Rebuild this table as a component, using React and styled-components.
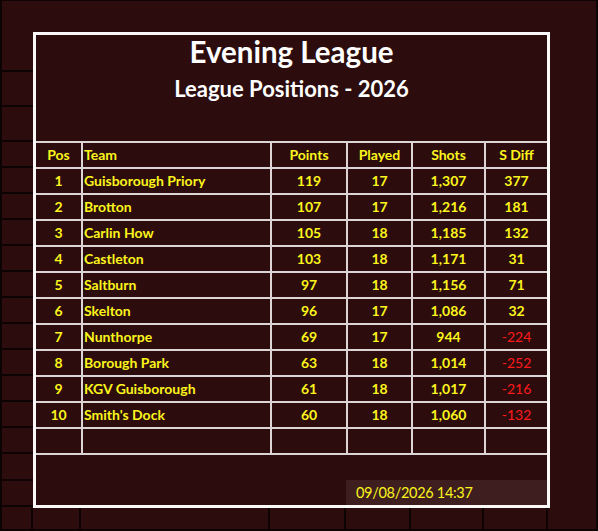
import React from "react";
import styled, { createGlobalStyle } from "styled-components";

const GlobalStyle = createGlobalStyle`
  body {
    margin: 0;
    background: #2c0c0d;
    font-family: "Lato", "Open Sans", sans-serif;
  }
`;

const Sheet = styled.div`
  width: 598px;
  height: 531px;
  box-sizing: border-box;
  background: #2c0c0d;
  border-top: 1px solid #0d0303;
  border-left: 2px solid #0d0303;
  border-right: 2px solid #0d0303;
  border-bottom: 2px solid #0d0303;
  display: flex;
  flex-direction: column;
`;

const TopStrip = styled.div`
  height: 31px;
`;

const Middle = styled.div`
  display: flex;
  height: 476px;
`;

const LeftGutter = styled.div`
  width: 31px;
  display: flex;
  flex-direction: column;
`;

const GutterCell = styled.div`
  box-sizing: border-box;
  height: ${(p) => p.$h}px;
  border-bottom: ${(p) => (p.$plain ? "none" : "2px solid #0d0303")};
`;

const Board = styled.div`
  width: 517px;
  box-sizing: border-box;
  border: 3px solid #fbf8f8;
  display: flex;
  flex-direction: column;
`;

const TitleBlock = styled.div`
  height: 106px;
  text-align: center;
  color: #ffffff;
  font-weight: 700;
`;

const Title = styled.div`
  font-size: 29.5px;
  line-height: 34px;
`;

const Subtitle = styled.div`
  font-size: 22px;
  line-height: 25px;
  margin-top: 7px;
`;

const Table = styled.div`
  border-bottom: 2px solid #ddd5d5;
`;

const Row = styled.div`
  display: grid;
  grid-template-columns: 45px 189px 76px 65px 73px 63px;
  height: 26px;
  box-sizing: border-box;
  border-top: 2px solid #ddd5d5;
`;

const Cell = styled.div`
  display: flex;
  align-items: center;
  justify-content: ${(p) => (p.$left ? "flex-start" : "center")};
  padding-left: ${(p) => (p.$left ? "1px" : "0")};
  padding-bottom: 1px;
  border-left: ${(p) => (p.$first ? "none" : "2px solid #ddd5d5")};
  font-size: 14px;
  font-weight: ${(p) => (p.$neg ? 400 : 700)};
  color: ${(p) => (p.$neg ? "#ff1a1a" : "#fcf51c")};
  white-space: nowrap;
`;

const Footer = styled.div`
  flex: 1;
  display: flex;
  flex-direction: column;
  justify-content: flex-end;
  align-items: flex-end;
`;

const Stamp = styled.div`
  width: 201px;
  height: 25px;
  box-sizing: border-box;
  padding-left: 10px;
  background: #3e1e1f;
  color: #fcf51c;
  font-size: 14.5px;
  letter-spacing: -0.3px;
  display: flex;
  align-items: center;
`;

const RightGutter = styled.div`
  flex: 1;
`;

const BottomStrip = styled.div`
  display: flex;
  flex: 1;
`;

const BottomCell = styled.div`
  width: ${(p) => p.$w}px;
  box-sizing: border-box;
  border-right: 2px solid #0d0303;
`;

const headers = ["Pos", "Team", "Points", "Played", "Shots", "S Diff"];

const teams = [
  [1, "Guisborough Priory", 119, 17, "1,307", 377],
  [2, "Brotton", 107, 17, "1,216", 181],
  [3, "Carlin How", 105, 18, "1,185", 132],
  [4, "Castleton", 103, 18, "1,171", 31],
  [5, "Saltburn", 97, 18, "1,156", 71],
  [6, "Skelton", 96, 17, "1,086", 32],
  [7, "Nunthorpe", 69, 17, "944", -224],
  [8, "Borough Park", 63, 18, "1,014", -252],
  [9, "KGV Guisborough", 61, 18, "1,017", -216],
  [10, "Smith's Dock", 60, 18, "1,060", -132],
];

const gutterRows = [40, 35, 35, ...Array(12).fill(26), 27, 26];
const bottomCols = [31, 48, 189, 76, 65, 73, 64];

function App() {
  return (
    <>
      <GlobalStyle />
      <Sheet>
        <TopStrip />
        <Middle>
          <LeftGutter>
            {gutterRows.map((h, i) => (
              <GutterCell key={i} $h={h} />
            ))}
            <GutterCell $h={1} $plain />
          </LeftGutter>
          <Board>
            <TitleBlock>
              <Title>Evening League</Title>
              <Subtitle>League Positions - 2026</Subtitle>
            </TitleBlock>
            <Table>
              <Row>
                {headers.map((h, i) => (
                  <Cell key={h} $first={i === 0} $left={i === 1}>
                    {h}
                  </Cell>
                ))}
              </Row>
              {teams.map(([pos, team, pts, played, shots, diff]) => (
                <Row key={pos}>
                  <Cell $first>{pos}</Cell>
                  <Cell $left>{team}</Cell>
                  <Cell>{pts}</Cell>
                  <Cell>{played}</Cell>
                  <Cell>{shots}</Cell>
                  <Cell $neg={diff < 0}>{diff}</Cell>
                </Row>
              ))}
              <Row>
                {headers.map((h, i) => (
                  <Cell key={h} $first={i === 0} />
                ))}
              </Row>
            </Table>
            <Footer>
              <Stamp>09/08/2026 14:37</Stamp>
            </Footer>
          </Board>
          <RightGutter />
        </Middle>
        <BottomStrip>
          {bottomCols.map((w, i) => (
            <BottomCell key={i} $w={w} />
          ))}
        </BottomStrip>
      </Sheet>
    </>
  );
}

export default App;
